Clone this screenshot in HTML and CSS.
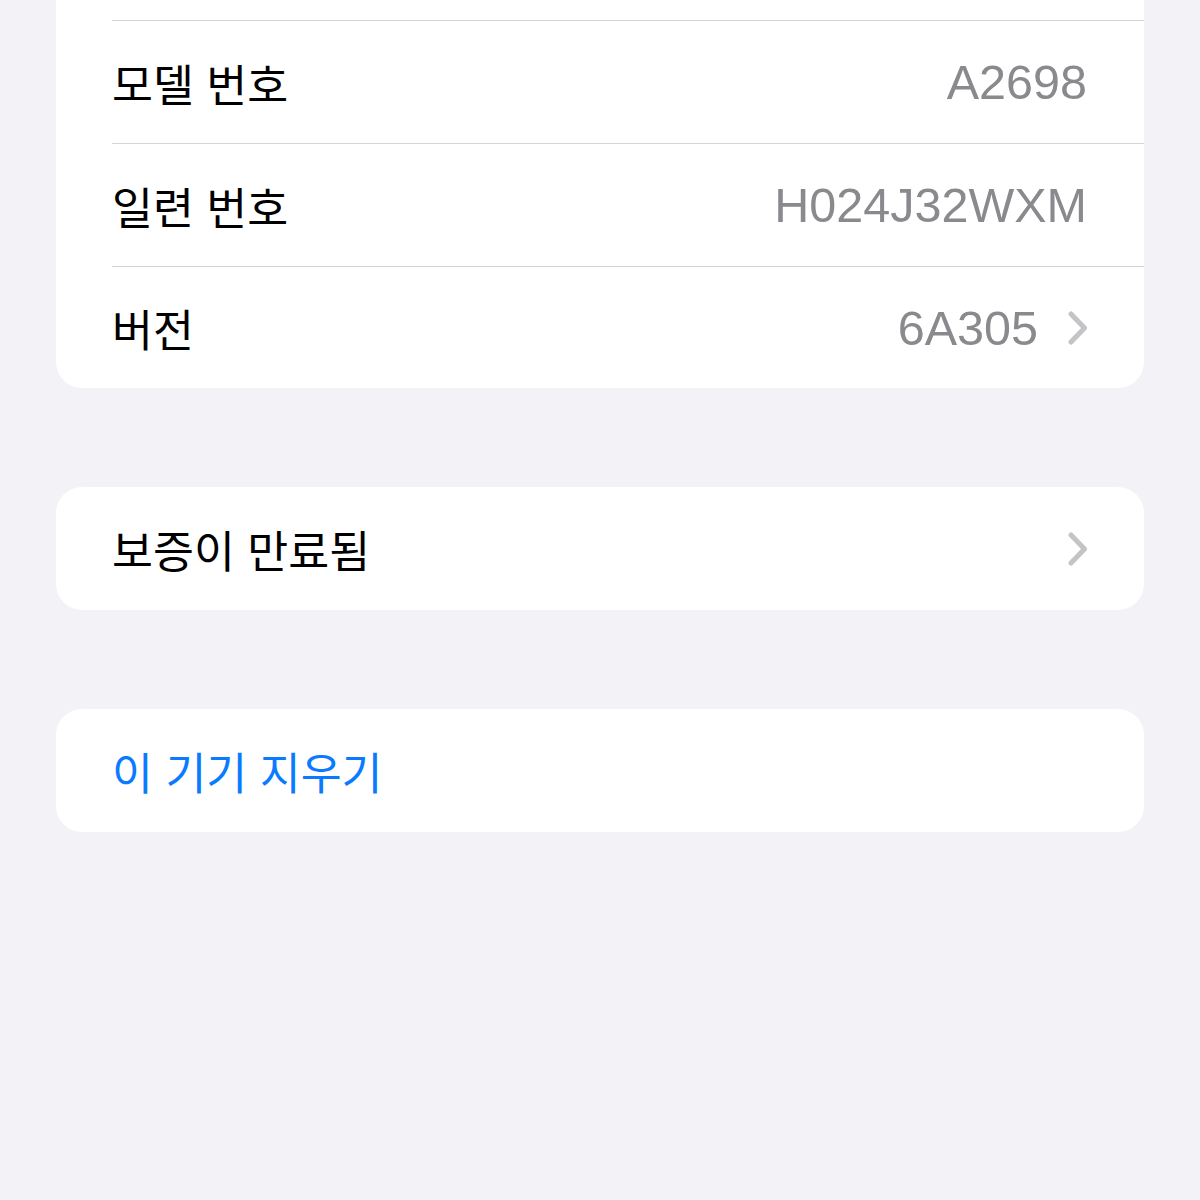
FILE: index.html
```html
<!DOCTYPE html>
<html lang="ko">
<head>
  <meta charset="UTF-8">
  <meta name="viewport" content="width=device-width, initial-scale=1.0">
  <title>정보</title>
  <link rel="stylesheet" href="styles.css">
</head>
<body>
  <div class="page">
    <div class="group first">
      <div class="row spacer"></div>
      <div class="row">
        <span class="label">모델 번호</span>
        <span class="value">A2698</span>
      </div>
      <div class="row">
        <span class="label">일련 번호</span>
        <span class="value">H024J32WXM</span>
      </div>
      <div class="row link">
        <span class="label">버전</span>
        <span class="value">6A305</span>
        <svg class="chevron" width="20" height="34" viewBox="0 0 20 34"><path d="M3 3 L16.5 17 L3 31" /></svg>
      </div>
    </div>

    <div class="group">
      <div class="row link">
        <span class="label">보증이 만료됨</span>
        <svg class="chevron" width="20" height="34" viewBox="0 0 20 34"><path d="M3 3 L16.5 17 L3 31" /></svg>
      </div>
    </div>

    <div class="group">
      <div class="row">
        <span class="label action">이 기기 지우기</span>
      </div>
    </div>
  </div>
</body>
</html>
```

FILE: styles.css
```css
body {
  margin: 0;
  background: #f2f2f7;
  font-family: "Liberation Sans", "Noto Sans CJK KR", sans-serif;
  height: 1200px;
  overflow: hidden;
}
.page {
  padding: 0 56px;
}
.group {
  background: #fff;
  border-radius: 26px;
  margin-bottom: 99px;
  padding-left: 56px;
}
.group.first {
  margin-top: -30px;
}
.row {
  display: flex;
  align-items: center;
  height: 123px;
  padding-right: 57px;
  box-sizing: border-box;
  border-bottom: 1px solid #d4d4d8;
}
.row.spacer {
  height: 51px;
}
.row:last-child {
  border-bottom: none;
}
.first .row:last-child {
  height: 121px;
}
.label {
  flex: 1;
  font-size: 44.5px;
  color: #000;
  font-family: "Noto Sans CJK KR", sans-serif;
}
.label.action {
  color: #0a7aff;
}
.value {
  font-size: 48.5px;
  color: #8a8a8e;
}
.chevron {
  margin-left: 30px;
  margin-right: -1px;
}
.chevron path {
  fill: none;
  stroke: #c4c4c7;
  stroke-width: 5;
  stroke-linecap: round;
  stroke-linejoin: round;
}
```
